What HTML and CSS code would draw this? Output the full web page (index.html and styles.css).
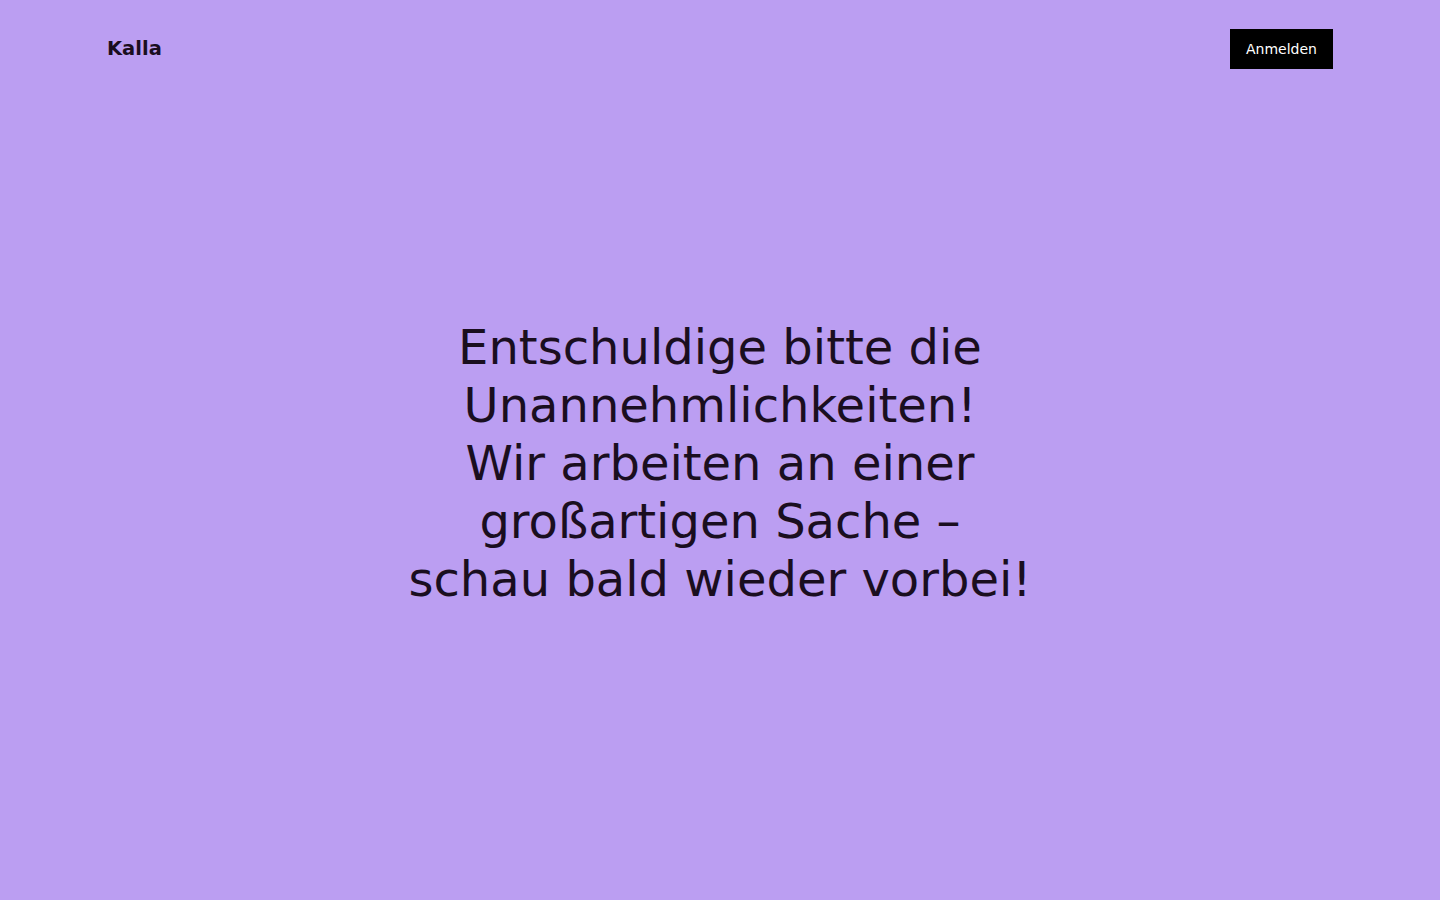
FILE: index.html
```html
<!DOCTYPE html>
<html lang="de">
<head>
<meta charset="utf-8">
<title>Kalla</title>
<link rel="stylesheet" href="styles.css">
</head>
<body>
<div class="page">
  <header class="header">
    <div class="brand">Kalla</div>
    <a class="login" href="#">Anmelden</a>
  </header>
  <main class="main">
    <h1 class="message">Entschuldige bitte die<br>Unannehmlichkeiten!<br>Wir arbeiten an einer<br>großartigen Sache –<br>schau bald wieder vorbei!</h1>
  </main>
</div>
</body>
</html>
```
FILE: styles.css
```css
html, body {
  margin: 0;
  padding: 0;
}
body {
  background: #bb9ef2;
  color: #1a0e1f;
  font-family: "DejaVu Sans", sans-serif;
}
.page {
  min-height: 100vh;
  display: flex;
  flex-direction: column;
  box-sizing: border-box;
}
.header {
  display: flex;
  justify-content: space-between;
  align-items: center;
  padding: 29px 107px 0 107px;
}
.brand {
  font-weight: bold;
  font-size: 19.5px;
  line-height: 38px;
}
.login {
  display: block;
  background: #000;
  color: #fff;
  font-size: 14px;
  line-height: 40px;
  height: 40px;
  padding: 0 16px;
  text-decoration: none;
}
.main {
  flex: 1;
  display: flex;
  align-items: center;
  justify-content: center;
  padding-bottom: 43px;
}
.message {
  margin: 0;
  font-weight: normal;
  font-size: 48px;
  line-height: 58px;
  text-align: center;
}
```
